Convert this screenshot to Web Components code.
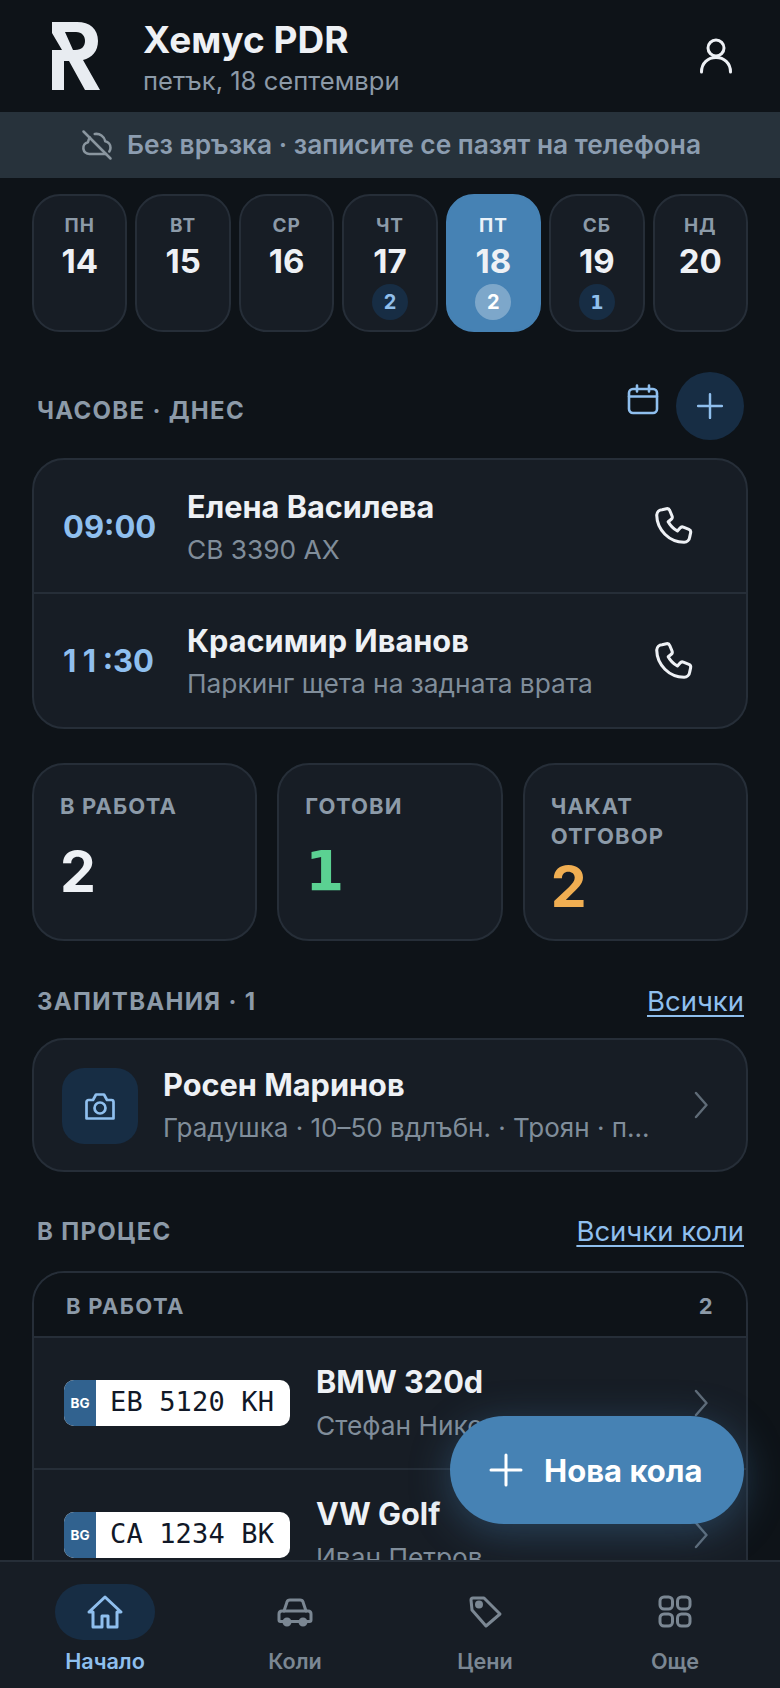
<!DOCTYPE html>
<html lang="bg"><head><meta charset="utf-8"><style>
html,body{margin:0;height:100%;background:#0e1318}
body{font-family:Inter,"Noto Sans",sans-serif;color:#eef1f5;overflow:hidden}
</style></head><body>
<pdr-app>
 <pdr-header slot="top"></pdr-header>
 <pdr-banner slot="top">Без връзка · записите се пазят на телефона</pdr-banner>
 <pdr-days></pdr-days>
 <pdr-head tall style="margin-top:40px;height:68px" label="Часове · днес"><icon-btn></icon-btn></pdr-head>
 <pdr-card style="margin-top:18px">
  <appt-row time="09:00" name="Елена Василева" sub="СВ 3390 АХ"></appt-row>
  <appt-row time="11:30" name="Красимир Иванов" sub="Паркинг щета на задната врата"></appt-row>
 </pdr-card>
 <pdr-stats style="margin-top:34px">
  <stat-box label="В работа" value="2"></stat-box>
  <stat-box label="Готови" value="1" color="#5bd192"></stat-box>
  <stat-box label="Чакат отговор" value="2" color="#f0ae52"></stat-box>
 </pdr-stats>
 <pdr-head style="margin-top:44px;height:32px" label="Запитвания · 1" link="Всички"></pdr-head>
 <pdr-card style="margin-top:21px"><inq-row name="Росен Маринов" sub="Градушка · 10–50 вдлъбн. · Троян · п..."></inq-row></pdr-card>
 <pdr-head style="margin-top:43px;height:32px" label="В процес" link="Всички коли"></pdr-head>
 <pdr-card style="margin-top:24px">
  <group-head label="В работа" count="2"></group-head>
  <car-row plate="EB 5120 KH" model="BMW 320d" owner="Стефан Николов"></car-row>
  <car-row plate="CA 1234 BK" model="VW Golf" owner="Иван Петров"></car-row>
 </pdr-card>
 <pdr-fab slot="over">Нова кола</pdr-fab>
 <pdr-nav slot="bottom"></pdr-nav>
</pdr-app>
<script>
const svg=(w,h,vb,body,sw)=>`<svg width="${w}" height="${h}" viewBox="${vb}" fill="none" stroke="currentColor" stroke-width="${sw}" stroke-linecap="round" stroke-linejoin="round">${body}</svg>`;
const I={
 user:svg(36,38,'0 0 36 38','<circle cx="18" cy="11" r="8"/><path d="M3.500 35C3.500 26 10 20.500 18 20.500S32.500 26 32.500 35"/>',3),
 cloud:svg(36,36,'0 0 24 24','<path d="M3 3l18 18"/><path d="M18 18H7a4 4 0 0 1-1-7.900 6.500 6.500 0 0 1 1.300-3.100"/><path d="M10.500 4.700A6 6 0 0 1 17.500 9.500a4.300 4.300 0 0 1 3.500 4.300c0 .9-.3 1.800-.8 2.500"/>',1.7),
 cal:svg(32,32,'0 0 32 32','<rect x="2" y="5" width="28" height="24" rx="4"/><path d="M2 12.500h28M10 1.500v6M22 1.500v6"/>',2.6),
 plus:s=>svg(s,s,'0 0 24 24','<path d="M12 4.500v15M4.500 12h15"/>',s==38?1.55:1.5),
 phone:svg(46,46,'0 0 24 24','<path d="M6.300 3.500 8.600 3a1.500 1.500 0 0 1 1.700.9l1.200 2.900a1.500 1.500 0 0 1-.4 1.700L9.500 9.800a12 12 0 0 0 4.800 4.800l1.400-1.600a1.500 1.500 0 0 1 1.700-.4l2.900 1.200a1.500 1.500 0 0 1 .9 1.700l-.5 2.300A3 3 0 0 1 17.800 20.500 14.500 14.500 0 0 1 3.500 6.300a3 3 0 0 1 2.800-2.800z"/>',1.6),
 cam:svg(32,28,'0 0 32 28','<path d="M2.500 26.500V10a2 2 0 0 1 2-2h4.500l3-5.500h8l3 5.500h4.500a2 2 0 0 1 2 2v16.500z"/><circle cx="16" cy="16" r="5.500"/>',2.7),
 chev:svg(14,28,'0 0 14 28','<path d="M2 2 12.500 14 2 26"/>',2.4),
 home:svg(38,36,'0 0 38 36','<path d="M3 18 19 3 35 18H31V33H22V22H16V33H7V18Z"/>',3),
 car:svg(38,30,'0 0 38 30','<path d="M8 14 11 5Q11.500 3 14 3H24Q26.500 3 27 5L30 14"/><path d="M6 14H32Q35 14 35 17V23Q35 24.500 33.500 24.500H4.500Q3 24.500 3 23V17Q3 14 6 14Z"/><circle cx="11" cy="25" r="3" fill="currentColor"/><circle cx="27" cy="25" r="3" fill="currentColor"/>',3),
 tag:svg(36,36,'0 0 36 36','<path d="M4 6Q4 4 6 4H17L33 20 19 32 5 16Z"/><circle cx="12" cy="10.500" r="2.500" fill="currentColor"/>',3),
 grid:svg(36,36,'0 0 36 36','<rect x="3" y="3" width="12.500" height="12" rx="4"/><rect x="20.500" y="3" width="12.500" height="12" rx="4"/><rect x="3" y="20" width="12.500" height="12" rx="4"/><rect x="20.500" y="20" width="12.500" height="12" rx="4"/>',3)
};
class Base extends HTMLElement{
 connectedCallback(){if(this.shadowRoot)return;this.attachShadow({mode:'open'}).innerHTML=`<style>${this.css()}</style>${this.html()}`;}
 css(){return ''} html(){return '<slot></slot>'}
 a(n,d=''){return this.getAttribute(n)??d}
}
const def=(n,c)=>customElements.define(n,c);
const F='Inter,"Noto Sans",sans-serif';
const D='"DejaVu Sans",Inter,sans-serif';
def('pdr-app',class extends Base{
 css(){return `:host{display:flex;flex-direction:column;position:relative;width:780px;height:1688px;overflow:hidden;background:#0e1318}
 .top{display:block;flex:none}.main{flex:1;min-height:0;overflow:hidden;padding:16px 32px 0}.bottom{flex:none;position:relative}.over{position:absolute;right:36px;bottom:164px;display:block}`}
 html(){return `<div class="top"><slot name="top"></slot></div><div class="main"><slot></slot></div><slot name="over" class="over"></slot><div class="bottom"><slot name="bottom"></slot></div>`}
});
def('pdr-header',class extends Base{
 css(){return `:host{display:flex;align-items:center;height:112px;box-sizing:border-box;padding:0 46px 0 52px}
 .logo{width:48px;height:68px;flex:none;margin-top:-1px}
 .t{margin-left:43px;flex:1;display:flex;flex-direction:column;padding-top:6px}
 h1{margin:0;font:700 37px/44px ${F};color:#eef1f5}
 p{margin:0;font:400 25.600px/38px ${F};color:#8c9aa8}
 .u{color:#eef1f5;display:flex}`}
 html(){return `<svg class="logo" viewBox="0 0 48 68"><path fill="#e8ecf1" fill-rule="evenodd" d="M0 0H25C38 0 46 7 46 19C46 29 40 36 31 38L48 68H33L17 39H12V68H0V28H10L0 11ZM13 10 21 28H23C30 28 33 24 33 19C33 14 30 10 24 10Z"/></svg>
 <div class="t"><h1>Хемус PDR</h1><p>петък, 18 септември</p></div><span class="u">${I.user}</span>`}
});
def('pdr-banner',class extends Base{
 css(){return `:host{display:flex;align-items:center;justify-content:center;gap:12px;height:66px;background:#27323b;color:#8c9db0;font:600 26.300px/1 ${F}}svg{color:#8a969f;flex:none}`}
 html(){return I.cloud+'<slot></slot>'}
});
def('pdr-days',class extends Base{
 css(){return `:host{display:grid;grid-template-columns:repeat(7,1fr);gap:8px}`}
 html(){const d=[['Пн',14],['Вт',15],['Ср',16],['Чт',17,2],['Пт',18,2,1],['Сб',19,1],['Нд',20]];
 return d.map(([w,n,c,a])=>`<day-pill w="${w}" n="${n}" ${c?`c="${c}"`:''} ${a?'active':''}></day-pill>`).join('')}
});
def('day-pill',class extends Base{
 css(){return `:host{display:flex;flex-direction:column;align-items:center;height:138px;box-sizing:border-box;border:2px solid #262e38;border-radius:28px;background:#171d25;padding-top:18px}
 :host([active]){background:#4682b4;border-color:#4682b4}
 .w{font:700 19px/24px ${F};letter-spacing:1px;color:#8c9aa8;text-transform:uppercase}
 :host([active]) .w{color:#eaf2f9}
 .n{font:700 33px/40px ${F};color:#eef1f5;margin-top:3px}
 .c{margin-top:3px;width:36px;height:36px;border-radius:50%;background:#172d44;color:#90bfec;font:700 20px/36px ${F};text-align:center}
 .c.one{font:700 19px/36px ${D}}
 :host([active]) .c{background:rgba(255,255,255,.3);color:#fff}`}
 html(){const c=this.a('c');return `<div class="w">${this.a('w')}</div><div class="n">${this.a('n')}</div>${c?`<div class="c ${c=='1'?'one':''}">${c}</div>`:''}`}
});
def('pdr-head',class extends Base{
 css(){return `:host{display:flex;align-items:center;justify-content:space-between;padding:0 4px 0 5px}
 .l{margin-top:2px;font:700 24px/32px ${F};letter-spacing:1.300px;color:#8c9aa8;text-transform:uppercase}
 :host([tall]) .l{margin-top:10px}
 a{font:400 27.500px/32px ${F};color:#8fbfee;text-decoration:underline;text-underline-offset:4px;text-decoration-thickness:1.500px}`}
 html(){const l=this.a('link');return `<span class="l">${this.a('label')}</span>${l?`<a>${l}</a>`:'<slot></slot>'}`}
});
def('icon-btn',class extends Base{
 css(){return `:host{display:flex;align-items:center;gap:17px}.c{color:#8fbfee;display:flex;margin-top:-12px}.b{width:68px;height:68px;border-radius:50%;background:#172d44;color:#8fbfee;display:flex;align-items:center;justify-content:center}`}
 html(){return `<span class="c">${I.cal}</span><span class="b">${I.plus(38)}</span>`}
});
def('pdr-card',class extends Base{
 css(){return `:host{display:block;border:2px solid #262e38;border-radius:32px;background:#171d25;overflow:hidden}`}
});
def('appt-row',class extends Base{
 css(){return `:host{display:flex;align-items:center;height:133px;padding:0 50px 0 29px;box-sizing:border-box}
 :host(:not(:last-child)){border-bottom:2px solid #262e38;height:134px}
 .t{width:124px;flex:none;font:700 31px/1 ${F};color:#8fbfee}
 .o{letter-spacing:6.500px}
 .m{flex:1;margin-top:2px}.n{font:700 30.700px/40px ${F};color:#eef1f5}.s{font:400 26.300px/36px ${F};color:#808d9a;margin-top:5px}
 .p{color:#eef1f5;display:flex}`}
 html(){const t=this.a('time').replace(/^11/,'<span class="o">11</span>');return `<div class="t">${t}</div><div class="m"><div class="n">${this.a('name')}</div><div class="s">${this.a('sub')}</div></div><span class="p">${I.phone}</span>`}
});
def('pdr-stats',class extends Base{
 css(){return `:host{display:grid;grid-template-columns:repeat(3,1fr);gap:20px}`}
});
def('stat-box',class extends Base{
 css(){return `:host{display:flex;flex-direction:column;height:178px;box-sizing:border-box;border:2px solid #262e38;border-radius:32px;background:#171d25;padding:26px 26px 18px}
 .l{font:700 22px/30px ${F};letter-spacing:1.100px;color:#8c9aa8;text-transform:uppercase}
 .v{flex:1;display:flex;align-items:center;font:700 57px/1 ${F}}
 .v.one{font:700 56px/1 ${D}}`}
 html(){const v=this.a('value');return `<div class="l">${this.a('label')}</div><div class="v ${v=='1'?'one':''}" style="color:${this.a('color','#eef1f5')}">${v}</div>`}
});
def('inq-row',class extends Base{
 css(){return `:host{display:flex;align-items:center;height:130px;padding:0 38px 0 28px;box-sizing:border-box}
 .i{width:76px;height:76px;border-radius:22px;background:#172d44;color:#8fbfee;display:flex;align-items:center;justify-content:center;flex:none;margin-top:1px}
 .m{flex:1;margin-left:25px}.n{font:700 30.700px/40px ${F}}.s{font:400 26px/36px ${F};color:#808d9a;margin-top:5px;white-space:nowrap}
 .c{color:#5f6b77;display:flex}`}
 html(){return `<div class="i">${I.cam}</div><div class="m"><div class="n">${this.a('name')}</div><div class="s">${this.a('sub')}</div></div><span class="c">${I.chev}</span>`}
});
def('group-head',class extends Base{
 css(){return `:host{display:flex;align-items:center;justify-content:space-between;height:65px;box-sizing:border-box;padding:2px 32px 0;background:#0e1318;border-bottom:2px solid #262e38;font:700 22px/1 ${F};letter-spacing:1.300px;color:#8c9aa8;text-transform:uppercase}`}
 html(){return `<span>${this.a('label')}</span><span>${this.a('count')}</span>`}
});
def('car-row',class extends Base{
 css(){return `:host{display:flex;align-items:center;height:132px;padding:0 38px 0 30px;box-sizing:border-box;border-bottom:2px solid #262e38}
 .m{flex:1;margin-left:26px}.n{font:700 30.700px/40px ${F}}.s{font:400 26.300px/36px ${F};color:#808d9a;margin-top:6px;white-space:nowrap}
 .c{color:#5f6b77;display:flex}`}
 html(){return `<lic-plate>${this.a('plate')}</lic-plate><div class="m"><div class="n">${this.a('model')}</div><div class="s">${this.a('owner')}</div></div><span class="c">${I.chev}</span>`}
});
def('lic-plate',class extends Base{
 css(){return `:host{display:flex;width:226px;height:46px;border-radius:10px;overflow:hidden;background:#fff;flex:none}
 .b{width:32px;background:#31628f;color:#fff;font:700 13.500px/46px ${F};text-align:center}
 .t{font:400 27px/44px "DejaVu Sans Mono","Liberation Mono",monospace;color:#111827;padding-left:14px;white-space:pre;letter-spacing:.15px}`}
 html(){return `<span class="b">BG</span><span class="t"><slot></slot></span>`}
});
def('pdr-fab',class extends Base{
 css(){return `:host{display:flex;align-items:center;width:294px;height:108px;box-sizing:border-box;padding-left:32px;gap:14px;border-radius:54px;background:#4682b4;color:#fff;font:700 31px/1 ${F};box-shadow:0 8px 40px rgba(70,130,180,.38)}svg{flex:none}`}
 html(){return I.plus(48)+'<slot></slot>'}
});
def('pdr-nav',class extends Base{
 css(){return `:host{display:grid;grid-template-columns:repeat(4,1fr);height:128px;box-sizing:border-box;background:#171d25;border-top:2px solid #262e38;padding:0 10px}`}
 html(){return `<nav-item active icon="home" label="Начало"></nav-item><nav-item icon="car" label="Коли"></nav-item><nav-item icon="tag" label="Цени"></nav-item><nav-item icon="grid" label="Още"></nav-item>`}
});
def('nav-item',class extends Base{
 css(){return `:host{display:flex;flex-direction:column;align-items:center;padding-top:22px;color:#7b8793}
 :host([active]){color:#8fbfee}
 .p{width:100px;height:56px;border-radius:28px;display:flex;align-items:center;justify-content:center}
 :host([active]) .p{background:#172d44}
 .l{font:600 21.600px/28px ${F};margin-top:7px}`}
 html(){return `<div class="p">${I[this.a('icon')]}</div><div class="l">${this.a('label')}</div>`}
});
</script></body></html>
